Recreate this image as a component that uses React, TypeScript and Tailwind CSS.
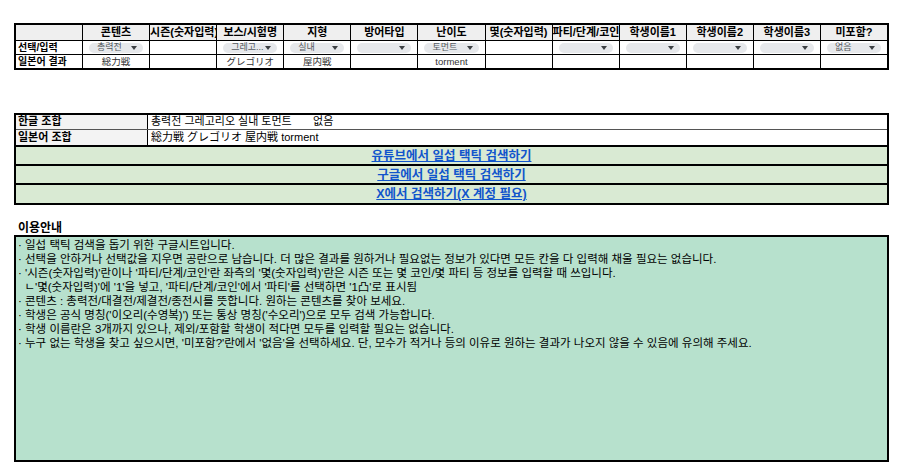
import React from "react";

const FONT = { fontFamily: '"Liberation Sans", "Noto Sans CJK KR", "Noto Sans CJK JP", sans-serif' };

const headers = ["콘텐츠", "시즌(숫자입력)", "보스/시험명", "지형", "방어타입", "난이도", "몇(숫자입력)", "파티/단계/코인", "학생이름1", "학생이름2", "학생이름3", "미포함?"];

type Sel = { chip: boolean; text: string };
const selects: Sel[] = [
  { chip: true, text: "총력전" },
  { chip: false, text: "" },
  { chip: true, text: "그레고..." },
  { chip: true, text: "실내" },
  { chip: true, text: "" },
  { chip: true, text: "토먼트" },
  { chip: false, text: "" },
  { chip: true, text: "" },
  { chip: true, text: "" },
  { chip: true, text: "" },
  { chip: true, text: "" },
  { chip: true, text: "없음" },
];

const results = ["総力戦", "", "グレゴリオ", "屋内戦", "", "torment", "", "", "", "", "", ""];

function Chip({ text }: { text: string }) {
  return (
    <div className="mx-[6px] h-[10px] rounded-full bg-[#e6e8eb] flex items-center justify-between pl-[8px] pr-[6px]">
      <span className="text-[9px] leading-none text-[#555a5f] whitespace-nowrap">{text}</span>
      <svg width="6" height="4" viewBox="0 0 6 4" className="shrink-0">
        <path d="M0 0H6L3 4Z" fill="#3c4043" />
      </svg>
    </div>
  );
}

const guide = [
  "· 일섭 택틱 검색을 돕기 위한 구글시트입니다.",
  "· 선택을 안하거나 선택값을 지우면 공란으로 남습니다. 더 많은 결과를 원하거나 필요없는 정보가 있다면 모든 칸을 다 입력해 채울 필요는 없습니다.",
  "· '시즌(숫자입력)'란이나 '파티/단계/코인'란 좌측의 '몇(숫자입력)'란은 시즌 또는 몇 코인/몇 파티 등 정보를 입력할 때 쓰입니다.",
  "  ㄴ'몇(숫자입력)'에 '1'을 넣고, '파티/단계/코인'에서 '파티'를 선택하면 '1凸'로 표시됨",
  "· 콘텐츠 : 총력전/대결전/제결전/종전시를 뜻합니다. 원하는 콘텐츠를 찾아 보세요.",
  "· 학생은 공식 명칭('이오리(수영복)') 또는 통상 명칭('수오리')으로 모두 검색 가능합니다.",
  "· 학생 이름란은 3개까지 있으나, 제외/포함할 학생이 적다면 모두를 입력할 필요는 없습니다.",
  "· 누구 없는 학생을 찾고 싶으시면, '미포함?'란에서 '없음'을 선택하세요. 단, 모수가 적거나 등의 이유로 원하는 결과가 나오지 않을 수 있음에 유의해 주세요.",
];

export default function App() {
  return (
    <div className="w-[900px] h-[475px] bg-white text-black overflow-hidden pl-[14px] pt-[23px]" style={FONT}>
      {/* top table */}
      <div className="w-[875px] border-2 border-black bg-black grid grid-cols-[66px_repeat(12,minmax(0,1fr))] grid-rows-[15px_13px_13px] gap-px">
        <div className="bg-[#efefef]" />
        {headers.map((h) => (
          <div key={h} className="bg-[#efefef] overflow-hidden whitespace-nowrap text-center text-[11px] font-bold leading-[15px]">
            {h}
          </div>
        ))}
        <div className="bg-white text-[10px] font-bold leading-[13px] pl-[2px] whitespace-nowrap">선택/입력</div>
        {selects.map((s, i) => (
          <div key={i} className="bg-white flex flex-col justify-center">
            {s.chip ? <Chip text={s.text} /> : null}
          </div>
        ))}
        <div className="bg-white text-[10px] font-bold leading-[13px] pl-[2px] whitespace-nowrap">일본어 결과</div>
        {results.map((r, i) => (
          <div key={i} className="bg-white text-center text-[9.5px] leading-[13px] text-[#333] whitespace-nowrap overflow-hidden">
            {r}
          </div>
        ))}
      </div>

      {/* combination table */}
      <div className="mt-[43px] w-[875px] border-2 border-black">
        <div className="grid grid-cols-[132px_1fr] h-[15px] border-b border-[#555]">
          <div className="bg-[#f3f3f3] border-r border-black text-[11px] font-bold leading-[13px] pl-[2px]">한글 조합</div>
          <div className="bg-white text-[11px] leading-[13px] pl-[3px] whitespace-pre">총력전 그레고리오 실내 토먼트       없음</div>
        </div>
        <div className="grid grid-cols-[132px_1fr] h-[17px] border-b-2 border-black">
          <div className="bg-[#f3f3f3] border-r border-black text-[11px] font-bold leading-[14px] pl-[2px]">일본어 조합</div>
          <div className="bg-white text-[11px] leading-[14px] pl-[3px] whitespace-pre">総力戦 グレゴリオ 屋内戦 torment</div>
        </div>
        <div className="h-[19px] bg-[#d9ead3] border-b-2 border-black flex items-center justify-center pt-[1px]">
          <span className="text-[12.5px] font-bold text-[#1155cc] underline leading-none">유튜브에서 일섭 택틱 검색하기</span>
        </div>
        <div className="h-[19px] bg-[#d9ead3] border-b-2 border-black flex items-center justify-center pt-[1px]">
          <span className="text-[12.5px] font-bold text-[#1155cc] underline leading-none">구글에서 일섭 택틱 검색하기</span>
        </div>
        <div className="h-[18px] bg-[#d9ead3] flex items-center justify-center pt-[1px]">
          <span className="text-[12.5px] font-bold text-[#1155cc] underline leading-none">X에서 검색하기(X 계정 필요)</span>
        </div>
      </div>

      {/* guide */}
      <div className="mt-[16px] pl-[4px] text-[12px] font-bold leading-[14px]">이용안내</div>
      <div className="w-[875px] h-[227px] border-2 border-black bg-[#b7e1cd] pt-[1px] pl-[2px]">
        {guide.map((g, i) => (
          <div key={i} className="text-[11.5px] leading-[14px] whitespace-pre">
            {g}
          </div>
        ))}
      </div>
    </div>
  );
}
